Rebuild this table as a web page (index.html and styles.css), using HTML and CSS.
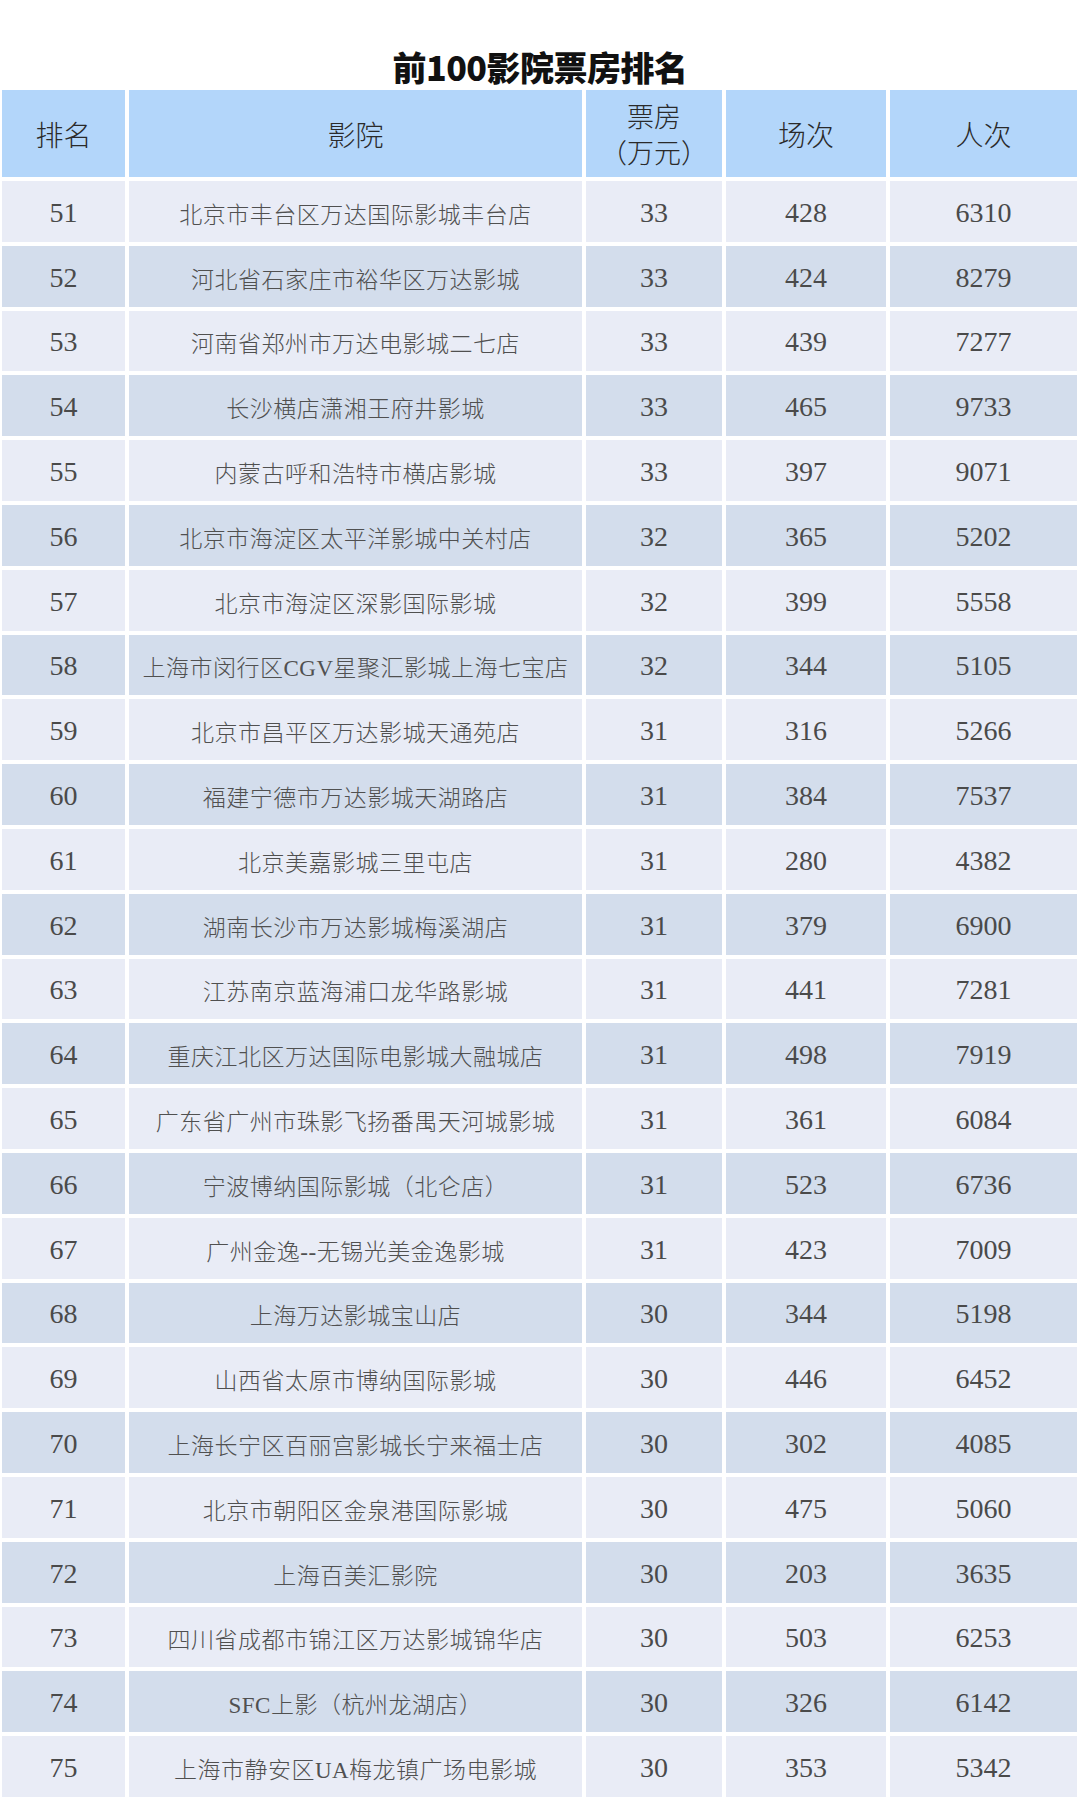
FILE: index.html
```html
<!DOCTYPE html>
<html lang="zh-CN">
<head>
<meta charset="utf-8">
<title>前100影院票房排名</title>
<link rel="stylesheet" href="styles.css">
</head>
<body>
<main class="page">
  <h1 class="title">前100影院票房排名</h1>
  <div class="table">
    <div class="row head">
      <div class="cell">排名</div>
      <div class="cell">影院</div>
      <div class="cell two"><span class="line">票房</span><span class="line">（万元）</span></div>
      <div class="cell">场次</div>
      <div class="cell">人次</div>
    </div>
    <div class="row odd"><div class="cell">51</div><div class="cell">北京市丰台区万达国际影城丰台店</div><div class="cell">33</div><div class="cell">428</div><div class="cell">6310</div></div>
    <div class="row even"><div class="cell">52</div><div class="cell">河北省石家庄市裕华区万达影城</div><div class="cell">33</div><div class="cell">424</div><div class="cell">8279</div></div>
    <div class="row odd"><div class="cell">53</div><div class="cell">河南省郑州市万达电影城二七店</div><div class="cell">33</div><div class="cell">439</div><div class="cell">7277</div></div>
    <div class="row even"><div class="cell">54</div><div class="cell">长沙横店潇湘王府井影城</div><div class="cell">33</div><div class="cell">465</div><div class="cell">9733</div></div>
    <div class="row odd"><div class="cell">55</div><div class="cell">内蒙古呼和浩特市横店影城</div><div class="cell">33</div><div class="cell">397</div><div class="cell">9071</div></div>
    <div class="row even"><div class="cell">56</div><div class="cell">北京市海淀区太平洋影城中关村店</div><div class="cell">32</div><div class="cell">365</div><div class="cell">5202</div></div>
    <div class="row odd"><div class="cell">57</div><div class="cell">北京市海淀区深影国际影城</div><div class="cell">32</div><div class="cell">399</div><div class="cell">5558</div></div>
    <div class="row even"><div class="cell">58</div><div class="cell">上海市闵行区CGV星聚汇影城上海七宝店</div><div class="cell">32</div><div class="cell">344</div><div class="cell">5105</div></div>
    <div class="row odd"><div class="cell">59</div><div class="cell">北京市昌平区万达影城天通苑店</div><div class="cell">31</div><div class="cell">316</div><div class="cell">5266</div></div>
    <div class="row even"><div class="cell">60</div><div class="cell">福建宁德市万达影城天湖路店</div><div class="cell">31</div><div class="cell">384</div><div class="cell">7537</div></div>
    <div class="row odd"><div class="cell">61</div><div class="cell">北京美嘉影城三里屯店</div><div class="cell">31</div><div class="cell">280</div><div class="cell">4382</div></div>
    <div class="row even"><div class="cell">62</div><div class="cell">湖南长沙市万达影城梅溪湖店</div><div class="cell">31</div><div class="cell">379</div><div class="cell">6900</div></div>
    <div class="row odd"><div class="cell">63</div><div class="cell">江苏南京蓝海浦口龙华路影城</div><div class="cell">31</div><div class="cell">441</div><div class="cell">7281</div></div>
    <div class="row even"><div class="cell">64</div><div class="cell">重庆江北区万达国际电影城大融城店</div><div class="cell">31</div><div class="cell">498</div><div class="cell">7919</div></div>
    <div class="row odd"><div class="cell">65</div><div class="cell">广东省广州市珠影飞扬番禺天河城影城</div><div class="cell">31</div><div class="cell">361</div><div class="cell">6084</div></div>
    <div class="row even"><div class="cell">66</div><div class="cell">宁波博纳国际影城（北仑店）</div><div class="cell">31</div><div class="cell">523</div><div class="cell">6736</div></div>
    <div class="row odd"><div class="cell">67</div><div class="cell">广州金逸--无锡光美金逸影城</div><div class="cell">31</div><div class="cell">423</div><div class="cell">7009</div></div>
    <div class="row even"><div class="cell">68</div><div class="cell">上海万达影城宝山店</div><div class="cell">30</div><div class="cell">344</div><div class="cell">5198</div></div>
    <div class="row odd"><div class="cell">69</div><div class="cell">山西省太原市博纳国际影城</div><div class="cell">30</div><div class="cell">446</div><div class="cell">6452</div></div>
    <div class="row even"><div class="cell">70</div><div class="cell">上海长宁区百丽宫影城长宁来福士店</div><div class="cell">30</div><div class="cell">302</div><div class="cell">4085</div></div>
    <div class="row odd"><div class="cell">71</div><div class="cell">北京市朝阳区金泉港国际影城</div><div class="cell">30</div><div class="cell">475</div><div class="cell">5060</div></div>
    <div class="row even"><div class="cell">72</div><div class="cell">上海百美汇影院</div><div class="cell">30</div><div class="cell">203</div><div class="cell">3635</div></div>
    <div class="row odd"><div class="cell">73</div><div class="cell">四川省成都市锦江区万达影城锦华店</div><div class="cell">30</div><div class="cell">503</div><div class="cell">6253</div></div>
    <div class="row even"><div class="cell">74</div><div class="cell">SFC上影（杭州龙湖店）</div><div class="cell">30</div><div class="cell">326</div><div class="cell">6142</div></div>
    <div class="row odd"><div class="cell">75</div><div class="cell">上海市静安区UA梅龙镇广场电影城</div><div class="cell">30</div><div class="cell">353</div><div class="cell">5342</div></div>
  </div>
</main>
</body>
</html>
```
FILE: styles.css
```css
html, body {
  margin: 0;
  padding: 0;
  background: #ffffff;
}

.page {
  width: 1080px;
  font-family: "Liberation Serif", "Noto Sans CJK SC", serif;
}

.title {
  margin: 0;
  padding-top: 45px;
  height: 45px;
  line-height: 44px;
  text-align: center;
  font-family: "Noto Sans CJK SC", sans-serif;
  font-weight: 900;
  font-size: 34px;
  color: #111111;
  letter-spacing: -0.5px;
}

.table {
  display: grid;
  row-gap: 4px;
  padding: 0 3px 0 2px;
}

.row {
  display: grid;
  grid-template-columns: 123px 453px 136px 160px 1fr;
  column-gap: 4px;
  height: 60.8px;
}

.row.head {
  height: 87px;
}

.cell {
  display: flex;
  align-items: center;
  justify-content: center;
  text-align: center;
  white-space: nowrap;
  padding-top: 3px;
  box-sizing: border-box;
}

.head .cell {
  background: #b3d6fa;
  color: #2a2a2a;
  font-family: "Noto Sans CJK SC", sans-serif;
  font-weight: 300;
  font-size: 28px;
  line-height: 34px;
  padding-top: 0;
}

.head .cell.two {
  flex-direction: column;
  font-size: 27px;
  line-height: 36px;
}

.line {
  display: block;
}

.odd .cell {
  background: #e9ecf6;
}

.even .cell {
  background: #d3ddec;
}

.odd .cell,
.even .cell {
  color: #4a4a4a;
  font-size: 28px;
}

.odd .cell:nth-child(2),
.even .cell:nth-child(2) {
  font-size: 23px;
  font-weight: 300;
  letter-spacing: 0.5px;
  color: #505050;
}
```
